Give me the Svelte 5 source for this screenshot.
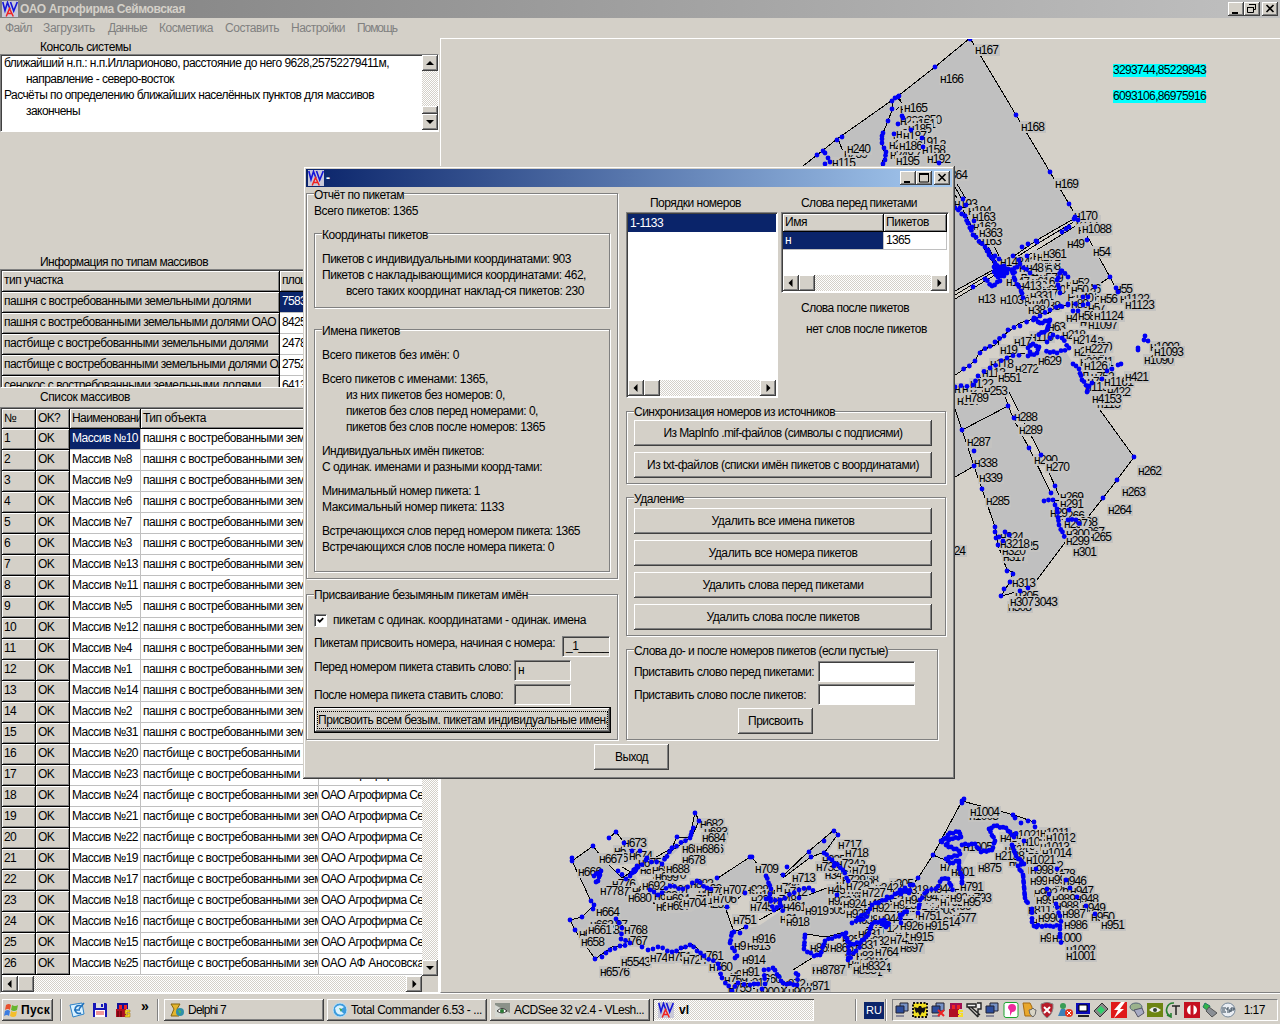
<script>
  // Spreads or tightens letters so that a caption takes the given width.
  function fit(node, width) {
    if (!width) return;
    const natural = node.getBoundingClientRect().width;
    node.style.letterSpacing = (width - natural) / node.textContent.length + 'px';
  }

  const menu = [['Файл', 27, 38], ['Загрузить', 52, 65], ['Данные', 39, 51], ['Косметика', 54, 66], ['Составить', 54, 66], ['Настройки', 54, 66], ['Помощь', 40, 50]];
  const plough = 'пашня с востребованными земельными долями';
  const pasture = 'пастбище с востребованными земельными долями';
  const types = [[plough, 247, '75834'], [plough + ' ОАО', 272, '84256'], [pasture, 264, '24781'], [pasture + ' ОАО', 290, '27523'], ['сенокос с востребованными земельными долями', 257, '64132']];
  const arrays = [10, 8, 9, 6, 7, 3, 13, 11, 5, 12, 4, 1, 14, 2, 31, 20, 23, 24, 21, 22, 19, 17, 18, 16, 15, 25];
  const deletions = [['Удалить все имена пикетов', 143], ['Удалить все номера пикетов', 149], ['Удалить слова перед пикетами', 161], ['Удалить слова после пикетов', 153]];
  const names = [
    ['Всего пикетов без имён: 0', 137, ''], ['Всего пикетов с именами: 1365,', 166, 'gap'],
    ['из них пикетов без номеров: 0,', 159, 'sub'], ['пикетов без слов перед номерами: 0,', 192, 'sub'], ['пикетов без слов после номеров: 1365', 199, 'sub'],
    ['Индивидуальных имён пикетов:', 162, 'gap'], ['С одинак. именами и разными коорд-тами:', 220, ''],
    ['Минимальный номер пикета: 1', 158, 'gap'], ['Максимальный номер пикета: 1133', 182, ''],
    ['Встречающихся слов перед номером пикета: 1365', 258, 'gap'], ['Встречающихся слов после номера пикета: 0', 232, '']
  ];

  const parse = (s) => s.trim().split(/\s+/).map((p) => p.split(',').map(Number));

  const fields = [
    '970,38 1016,115 1050,172 1077,218 1037,240 998,268 950,295 950,170 798,170 817,155 837,139 898,96 935,67',
    '950,302 1000,274 1040,250 1077,224 1087,240 1110,277 1095,287 1083,297 1060,306 1040,317 1020,323 1004,335 1000,345 980,352 975,361 950,378',
    '950,386 973,385 978,375 990,368 1007,357 1025,353 1033,351 1066,352 1073,363 1079,373 1100,410 1134,457 1117,480 1103,498 1078,530 1067,539 1037,580 1030,592 1001,596 1013,572 1007,570 998,545 995,527 982,489 974,466 950,480',
    '572,861 593,846 604,860 622,878 634,870 660,858 672,848 690,832 695,812 699,821 692,836 672,855 650,866 634,872 640,886 655,896 670,885 683,889 697,880 707,888 718,878 750,857 765,875 785,873 809,851 834,830 838,834 830,850 811,856 785,876 771,890 757,889 745,893 727,907 732,932 760,925 800,898 828,887 840,896 858,910 875,903 900,890 918,878 933,855 962,801 1014,815 1034,822 1030,840 1050,860 1058,870 1062,900 1062,944 1035,925 1023,895 1020,860 1005,830 993,828 990,848 970,850 962,866 950,880 925,897 920,912 890,925 870,943 850,960 845,936 826,938 805,934 804,949 814,955 793,970 800,984 766,990 730,990 720,973 715,963 703,956 690,944 674,952 655,946 634,944 612,947 602,957 595,959 575,930 570,920 582,917 594,905 591,901'
  ];
  const gaps = ['1003,391 1013,418 1029,448 1051,493 1055,486 1041,455 1019,412 1007,388', '727,907 745,893 757,889 770,897 772,912 760,918 742,929 737,932'];
  const lines = [
    '798,170 817,155 837,139 898,96 935,67 970,38 1016,115 1050,172 1069,204 1077,218 1110,277 1118,293',
    '1077,217 1037,240 1000,266 955,291', '1075,221 1037,244 1000,268 955,295', '1077,225 1045,245 1000,272 955,299',
    '892,101 892,110 888,121 883,133 882,143 885,155 881,166', '899,97 902,104 896,110', '897,97 906,108', '838,139 842,149 846,153',
    '955,187 969,212 985,240 1000,270', '957,184 975,214 991,240 1002,262', '951,187 963,210 978,238 996,268',
    '1110,277 1095,287 1083,293 1068,304 1040,317 1020,323 1004,335 995,345 980,351 975,361 960,372 950,378',
    '955,386 973,385 990,368 1007,357 1025,353', '1089,387 1100,410 1134,457 1117,480 1103,498 1078,530 1067,540 1037,580',
    '952,400 962,430 974,466 982,489 995,527 998,545 1007,570 1013,572 1010,582 1001,596 1020,591',
    '962,430 1008,406', '974,466 950,480', '1003,391 1013,418 1029,448 1051,493', '1007,388 1019,412 1041,455 1055,486 1061,500',
    '1061,500 1054,501 1059,525 1066,539', '998,339 1000,350 1025,339',
    '572,861 593,846 604,860', '609,838 616,832 635,856', '572,861 591,901 594,905 582,917 570,920 575,930 595,959 612,947 634,944',
    '604,860 622,878 634,870 672,848 677,837 690,837 695,812 699,821 692,836 662,858', '622,867 634,874', '718,878 750,857 752,858 763,870 771,875 785,874 809,851 834,830 838,834',
    '783,878 811,857 825,852 838,834', '727,907 745,893 757,889 770,897', '725,907 734,932 746,927', '759,920 800,898 827,888 837,894',
    '933,855 962,801 1014,815 1034,822', '933,855 918,878 912,886 900,890 874,908', '933,855 945,860', '806,934 826,937 845,932', '793,970 812,958', '714,963 722,980', '675,952 692,944 705,955 714,963'
  ];
  // Surveyed points plotted one by one.
  const spots = `970,39 935,67 898,97 892,101 895,98 899,96 892,109 888,121 883,133 837,140 842,137 823,151 817,155 825,153 828,158 830,162 825,164 1016,115 1050,172 1069,204 1075,217 1078,220 1074,219
    902,116 898,124 894,134 911,130 922,138 923,147 939,163 903,118 963,199 966,205 960,208 965,216 974,221 968,223 972,227 1022,247 1028,244 1036,241 1037,242 1062,232 1069,227 1066,229 1013,256 1027,256 1019,260 988,250 995,256 999,259 989,255 973,287
    1110,277 1095,287 1083,297 1116,288 1118,292 1088,297 1087,240 1060,306 1068,305 1073,311 1078,311 1088,304
    1134,457 1117,480 1103,498 962,430 974,451 974,466 982,489 1008,406 1014,418 1029,448 1041,455 1055,486 1051,493 1069,510 995,527 995,532 996,538 998,545 999,537 1003,541 1005,532 1009,535 1007,571 1013,574 1010,582 1004,589 1001,596 1020,591 1028,588
    1138,350 1145,336 1148,341 1144,340 1138,348 1107,371 1112,369 1118,365 1102,379 1121,364 1089,386 1087,392 1092,383
    593,846 572,861 572,858 609,838 616,832 624,843 632,851 640,851 647,858 591,901 594,905 593,909 582,917 570,920 575,930 595,959 602,957 717,878 750,857 752,857 695,813 699,821 677,837 691,835 672,848 834,831 838,835 824,841 809,852 811,857 787,867 783,875 745,893 727,907 734,932 740,933 746,927 799,898 837,895 834,866
    933,855 941,841 962,801 964,799 962,803 1013,815 1015,818 1021,823 1034,822 1028,821 1035,827 918,878 913,885 900,890 910,885 887,897 878,903 1047,889 1049,894 1057,869 1066,880 1070,888 1077,897 1086,906 1095,914 1036,869`;
  // Chains of closely set points: [step, vertices].
  const chains = [
    [4, '882,135 882,143 886,151 885,160 881,166'], [4, '955,207 965,216 973,234 985,247 995,262 1000,272'], [3, '994,266 1004,266 1007,272 994,272 998,276 1005,276'], [4, '1030,272 1020,264 1012,270 1015,280 1021,290 1024,300'],
    [4, '985,278 992,286 1000,280 995,271 1004,275 998,268 1008,268 1018,273'], [4, '1061,270 1057,280 1060,292 1065,291'], [6, '1062,270 1068,277 1073,284'],
    [7, '1083,304 1068,304 1050,309 1040,316 1020,325 1008,330 1004,335 995,342 980,352 975,361 958,373'], [3, '1034,317 1040,323 1050,319 1047,330 1036,335'],
    [3, '1028,347 1033,344 1039,346 1037,353 1028,355 1032,349'], [6, '955,386 973,385 978,375 990,368 1007,357 1025,353'], [4, '1047,341 1053,335 1062,337 1069,348 1057,352 1043,351'],
    [4, '1073,363 1079,369 1082,379 1088,387 1087,393'], [4, '1044,500 1053,500 1057,508 1059,525 1066,539'], [5, '1068,519 1076,520 1082,525'],
    [3, '594,875 601,871 598,880 594,884'], [3, '632,872 637,866 634,874'], [5, '618,870 626,879 634,871 646,860 662,863 672,848 690,837 695,822'], [5, '650,889 658,895 670,885 683,889 697,880 707,888 715,888'],
    [5, '616,918 622,928 621,938 630,943 610,949 602,957'], [5, '642,946 648,950 658,946 672,952 690,944 704,956 718,963 722,978 732,990 738,983 750,984 758,984 766,992'],
    [4, '732,932 730,943 737,955 733,961'], [4, '766,875 771,889 769,897 774,910 780,903 784,913'], [4, '824,852 832,860 843,869 850,885'], [5, '766,898 780,900 799,889 809,888 817,891'],
    [4, '765,983 764,970 773,967 783,983 797,984 798,975 794,970'], [4, '805,934 804,949 814,955 820,955 825,940 846,933 849,950 848,960 856,950 863,945'],
    [3, '845,936 851,944 860,942 868,935 872,923 884,920 891,925'], [4, '858,917 868,912 872,904 889,898 901,890 909,893 911,886'], [3, '901,893 905,888 909,891'],
    [3, '882,923 886,927 890,921'], [3, '901,922 900,915 909,909'], [4, '918,912 920,900 927,890 936,889 942,878 948,879 954,892'],
    [3, '942,841 950,833 959,831 961,837 950,838 946,845 959,850 960,854 946,858 950,863 959,860 959,869 962,875 962,886'],
    [3, '962,844 975,844 981,851 992,850 995,840 989,829 994,825 1006,828 1014,836 1018,831'], [5, '1024,840 1027,834'],
    [3, '1012,844 1016,856 1024,863 1018,866 1023,874 1025,898 1029,905'], [5, '1032,908 1032,922 1041,930'], [4, '1034,925 1050,926 1060,925 1060,937 1062,946'], [4, '1056,903 1060,916 1062,925'], [4, '852,922 860,920 870,915']
  ];
  function walk([step, s]) {
    const pts = parse(s), out = [];
    for (let i = 1; i < pts.length; i++) {
      const [ax, ay] = pts[i - 1], [bx, by] = pts[i];
      const n = Math.max(1, Math.round(Math.hypot(bx - ax, by - ay) / step));
      for (let k = 0; k < n; k++) out.push([ax + ((bx - ax) * k) / n, ay + ((by - ay) * k) / n + ((i + k) % 2)]);
    }
    return out;
  }
  const dots = [...parse(spots), ...chains.flatMap(walk)];

  // x of the left edge, y of the middle, caption; later ones cover earlier ones.
  const labels = `975,50,н167;940,79,н166;900,109,н164;904,108,н165;900,121,н232;912,124,н151;896,134,н200;908,129,н185;903,136,н187;915,142,н191;890,155,н248;896,161,н195;889,145,н246;899,146,н186;922,150,н158;927,159,н192;844,154,н239;847,149,н240;832,163,н115;1021,127,н168;1055,184,н169;1076,221,н171;1074,216,н170;1078,230,н1087;1082,229,н1088;1067,244,н49;1093,252,н54;944,175,н364;954,204,н193;968,211,н194;972,217,н163;973,227,н162;974,236,н339;978,241,н163;979,233,н363;1000,262,н148;1019,268,н347;1033,256,н160;1037,257,н171;1043,254,н361;1026,268,н48;1006,282,н147;1018,286,н413;1030,296,н331;1032,304,н40;978,299,н13;1000,300,н103;1028,310,н38;1072,283,н52;1071,290,н50;1076,298,н40;1071,304,н80;1115,289,н55;1120,299,н1122;1125,305,н1123;1088,308,н57;1100,299,н56;1066,318,н44;1080,322,н60;1088,325,н1097;1078,316,н58;1094,316,н1124;1048,327,н63;1030,337,н110;1062,335,н218;1073,340,н214;1074,352,н207;1085,349,н227;1080,362,н225;1084,366,н126;1014,342,н17;1000,350,н19;990,364,н118;1015,369,н272;1038,361,н629;982,373,н113;998,378,н551;954,389,н107;962,389,н121;970,384,н122;984,391,н253;957,401,н337;965,398,н789;1150,347,н1092;1144,360,н1090;1154,352,н1093;1085,387,н1132;1104,382,н1161;1125,377,н421;1107,392,н422;1097,404,н113;1092,399,н4153;1014,417,н288;1019,430,н289;1034,460,н290;1046,467,н270;967,442,н287;974,463,н338;979,478,н339;986,501,н285;1138,471,н262;1122,492,н263;1108,510,н264;1060,497,н269;1060,504,н291;1061,516,н266;1050,513,н29;1074,522,н268;1064,524,н297;1081,532,н267;1088,537,н265;1066,534,н300;1066,541,н299;1073,552,н301;1000,537,н324;1015,546,н325;1003,557,н317;1002,551,н320;1000,544,н3218;1011,584,н312;1012,583,н313;1015,596,н305;1028,602,н3043;1008,607,н308;1010,602,н307;948,551,н24;
    700,824,н682;704,832,н683;702,838,н684;700,849,н686;682,849,н68;696,849,н686;614,851,н671;616,858,н671;599,859,н667;629,856,н674;638,863,н675;682,860,н678;578,872,н666;652,870,н689;655,877,н699;666,869,н688;612,884,н776;617,892,н771;600,891,н778;632,891,н69;642,886,н692;628,898,н680;654,896,н693;666,899,н694;656,907,н696;667,906,н697;690,900,н701;683,903,н704;707,892,н708;713,899,н706;723,890,н707;755,869,н709;590,925,н663;596,912,н664;579,934,н662;588,930,н661;581,942,н658;624,930,н768;624,941,н767;600,972,н6576;621,962,н5543;650,958,н748;668,957,н751;683,960,н724;700,956,н761;709,967,н760;724,980,н759;728,988,н755;750,907,н745;733,920,н751;734,946,н917;747,946,н913;752,939,н916;742,960,н914;742,972,н91;776,888,н736;792,878,н713;784,892,н712;773,900,н748;783,907,н461;780,919,н91;786,922,н918;805,911,н919;838,845,н717;845,853,н718;816,867,н735;836,864,н734;852,870,н719;842,880,н729;846,886,н728;828,901,н920;843,904,н924;846,914,н925;810,948,н869;830,948,н866;812,970,н875;816,970,н8787;806,986,н871;782,984,н872;772,992,н901;756,992,н900;788,992,н902;
    862,893,н727;872,908,н921;878,919,н944;858,934,н631;866,941,н632;855,945,н831;856,956,н833;860,962,н834;853,970,н833;862,966,н832;875,952,н764;890,940,н742;905,934,н772;900,926,н926;910,937,н915;918,916,н751;925,926,н915;893,905,н923;905,900,н944;920,897,н943;930,889,н944;940,902,н792;950,898,н932;960,887,н791;968,898,н793;963,902,н95;940,867,н7;951,872,н801;978,868,н875;963,847,н1005;969,816,н1003;970,812,н1004;995,856,н2138;1012,835,н1021;1022,842,н1087;1040,833,н1011;1046,838,н1012;1040,847,н1013;1042,853,н1014;1026,860,н1021;1030,870,н998;1030,881,н995;1048,880,н991;1063,881,н946;1070,891,н947;1075,899,н948;1082,908,н949;1091,917,н950;1101,925,н951;1034,893,н992;1036,900,н993;1052,899,н989;1055,906,н988;1062,914,н987;1064,925,н986;1038,918,н990;1040,938,н999;1052,938,н1000;1066,950,н1002;1066,956,н1001;623,843,н673`
    .split(';').map((l) => l.trim().split(','));
  // Rows of captions that are mostly hidden by their neighbours.
  const crowd = [[900, 115, 926, 128, 5], [893, 140, 935, 160, 5], [1018, 262, 1045, 306, 4], [1066, 285, 1082, 303, 4], [1080, 342, 1092, 385, 5], [640, 870, 672, 905, 5], [604, 925, 609, 930, 5], [745, 890, 760, 900, 5], [855, 880, 905, 950, 4], [842, 940, 870, 972, 4], [905, 890, 958, 925, 4], [1000, 838, 1044, 868, 4], [1028, 870, 1062, 925, 4], [690, 884, 710, 905, 5], [730, 975, 770, 990, 4], [822, 860, 850, 910, 5]]
    .flatMap(([x0, y0, x1, y1, s]) => {
      const out = [];
      for (let y = y0, k = 0; y <= y1; y += s, k++) out.push([x0 + (((k * 17) % 10) / 10) * (x1 - x0), y, 'н' + (193 + ((k * 37 + x0) % 780))]);
      return out;
    });
  const captions = [...crowd, ...labels];

  const tray = ['net', 'bat', 'netx', 'red', 'wrench', 'net', 'pink', 'shieldy', 'shield', 'people', 'screen', 'chip', 'flash', 'disk', 'nvidia', 'sync', 'phi', 'usb', 'esp'];
</script>

{#snippet T(text, w, cls = '')}<span class="t {cls}" use:fit={w}>{text}</span>{/snippet}

{#snippet Logo()}
  <svg class="logo" viewBox="0 0 16 16"><path d="M0 0h16v16H0z" fill="#c9c9d8" /><path d="M.8 1L3 9.500 5.500 1.500 8 8M8.500 1l3.200 9L15.300 1" fill="none" stroke="#1515d8" stroke-width="1.600" /><path d="M4.200 15.500L7.500 7.500l3.800 8M5.500 12.500h4.500" fill="none" stroke="#f02020" stroke-width="1.500" /></svg>
{/snippet}

{#snippet Arrow(dir)}
  <span class="sb"><svg viewBox="0 0 16 16">
    {#if dir === 'l'}<path d="M9.500 4v8L5.500 8z" />{:else if dir === 'r'}<path d="M6.500 4v8l4-4z" />{:else if dir === 'u'}<path d="M4 10h8L8 6z" />{:else}<path d="M4 6h8l-4 4z" />{/if}
  </svg></span>
{/snippet}

{#snippet HScroll()}<div class="hs">{@render Arrow('l')}<span class="sb"></span><i class="track"></i>{@render Arrow('r')}</div>{/snippet}

{#snippet WinButtons(max)}
  <div class="wb">
    <span><svg viewBox="0 0 16 14"><path d="M4 10h6v2H4z" /></svg></span>
    <span><svg viewBox="0 0 16 14">{#if max}<path d="M3.500 3h9v8h-9z" fill="none" stroke="#000" /><path d="M3 2h10v2H3z" />{:else}<path d="M5.500 3v-.5h6v5h-2M3.500 5.500h6v5h-6z" fill="none" stroke="#000" /><path d="M5 2h7v1H5zM3 5h7v1H3z" />{/if}</svg></span>
    <span class="x"><svg viewBox="0 0 16 14"><path d="M4.500 3l7 7M11.500 3l-7 7" stroke="#000" stroke-width="1.600" /></svg></span>
  </div>
{/snippet}

<div class="desk">
  <header class="title">{@render Logo()}{@render T('ОАО Агрофирма Сеймовская', 165, 'bold')}{@render WinButtons(false)}</header>
  <nav>{#each menu as [m, w, slot]}<span class="mi" style:width="{slot}px">{@render T(m, w)}</span>{/each}</nav>

  <div class="main">
    <aside>
      <h2 class="c1">{@render T('Консоль системы', 91)}</h2>
      <div class="console sunk">
        <div class="log">
          <p>{@render T('ближайший н.п.: н.п.Илларионово, расстояние до него 9628,25752279411м,', 385)}</p>
          <p class="in">{@render T('направление - северо-восток', 148)}</p>
          <p>{@render T('Расчёты по определению ближайших населённых пунктов для массивов', 370)}</p>
          <p class="in">{@render T('закончены', 54)}</p>
        </div>
        <div class="vs">{@render Arrow('u')}<i class="track"></i><span class="sb thumb"></span>{@render Arrow('d')}</div>
      </div>
      <h2 class="c2">{@render T('Информация по типам массивов', 168)}</h2>
      <div class="types sunk">
        <div class="row"><b class="fx w1">{@render T('тип участка', 59)}</b><b class="fx rest">{@render T('площадь', 45)}</b></div>
        {#each types as [name, w, v], i}
          <div class="row"><b class="fx w1">{@render T(name, w)}</b><b class="cell rest" class:sel={i === 0}>{@render T(v, 30)}</b></div>
        {/each}
      </div>
      <h2 class="c3">{@render T('Список массивов', 90)}</h2>
      <div class="list sunk">
        <div class="rows">
          <div class="grid">
            <div class="row head"><b class="fx a">№</b><b class="fx b">{@render T('OK?', 22)}</b><b class="fx c">{@render T('Наименование', 76)}</b><b class="fx d">{@render T('Тип объекта', 63)}</b><b class="fx e">{@render T('Владелец', 50)}</b></div>
            {#each arrays as n, i}
              <div class="row"><b class="fx a">{@render T(String(i + 1), i < 9 ? 6 : 12)}</b><b class="fx b">{@render T('OK', 16)}</b><b class="cell c" class:sel={i === 0}>{@render T('Массив №' + n, n > 9 ? 66 : 60)}</b><b class="cell d">{@render T(i < 15 ? plough : pasture, i < 15 ? 251 : 268)}</b><b class="cell e">{@render T(i === 25 ? 'ОАО АФ Аносовская' : 'ОАО Агрофирма Сеймовская', i === 25 ? 109 : 150)}</b></div>
            {/each}
          </div>
          <div class="vs">{@render Arrow('u')}<i class="track"></i>{@render Arrow('d')}</div>
        </div>
        <div class="foot">{@render HScroll()}</div>
      </div>
    </aside>

    <section class="map">
      <svg viewBox="441 39 839 953" width="839" height="953">
        {#each fields as f}<polygon points={f} fill="#c0c0c0" />{/each}
        {#each gaps as g}<polygon points={g} fill="#d4d0c8" />{/each}
        {#each lines as l}<polyline points={l} fill="none" stroke="#000" shape-rendering="crispEdges" />{/each}
        {#each captions as [x, y, s]}
          <rect x={+x - 1} y={+y - 6} width={s.length * 6 + 2} height="12" fill="#c4c3c1" />
          <text x={x} y={+y + 4} textLength={s.length * 6}>{s}</text>
        {/each}
        {#each dots as [x, y]}<circle cx={x} cy={y} r="2.4" fill="#0000f5" />{/each}
      </svg>
      <span class="geo g1">{@render T('3293744,85229843', 93)}</span>
      <span class="geo g2">{@render T('6093106,86975916', 93)}</span>
    </section>
  </div>

  <footer>
    <span class="start"><svg viewBox="0 0 16 16"><path d="M2 3q3-2 5 0L6 8Q4 6 1 8z" fill="#e8502c" /><path d="M8 3q3 2 6 0l-1 5q-3 2-6 0z" fill="#65b52e" /><path d="M1 9q3-2 5 0l-1 5q-2-2-5 0z" fill="#3c7de0" /><path d="M7 9q3 2 6 0l-1 5q-3 2-6 0z" fill="#f3be2c" /></svg>{@render T('Пуск', 29, 'bold')}</span>
    <i class="sep s1"></i>
    <span class="quick">
      <svg viewBox="0 0 16 16"><path d="M1 3l12-2 2 11-11 3z" fill="#d9f1ff" stroke="#2d82c8" /><path d="M12 4a4 4 0 1 0 0 7M5 8h6M10 7l5-6" fill="none" stroke="#2272bd" stroke-width="1.600" /></svg>
      <svg viewBox="0 0 16 16"><path d="M1 1h13l1 1v13H1z" fill="#1616b8" /><path d="M4 1h8v5H4z" fill="#ddd" /><path d="M9 2h2v3H9z" fill="#1616b8" /><path d="M3 8h10v7H3z" fill="#fff" /><path d="M4 10h8M4 12h8" stroke="#d33" /></svg>
      <svg viewBox="0 0 16 16"><path d="M2 1h11v6H2z" fill="#111198" /><path d="M4 3h3v4H4zM9 3h3v4H9z" fill="#e22" /><path d="M1 7h10v8H1z" fill="#b00e22" /><path d="M3 9v6M6 9v6" stroke="#400" /><path d="M10 8h5v2h-3v1h3v4h-5v-2h3v-1h-3z" fill="#f5dc28" stroke="#960" stroke-width=".5" /></svg>
    </span>
    <span class="more">»</span>
    <i class="sep"></i>
    <span class="task"><svg viewBox="0 0 16 16"><path d="M2 2h9L8 7l2 7H2l3-7z" fill="#e3b62e" stroke="#86650c" /><circle cx="11" cy="10" r="4" fill="#2e8fa8" /><path d="M9 8l3 1-1 3z" fill="#53c04b" /></svg>{@render T('Delphi 7', 38)}</span>
    <span class="task"><svg viewBox="0 0 16 16"><circle cx="8" cy="8" r="7" fill="#3c9bdd" stroke="#bfe3f8" /><path d="M3 6q4-5 9-1L8 8l4 4q-6 2-8-2z" fill="#d9f2ff" /><path d="M7 6l3 1-1 3z" fill="#3aa34f" /></svg>{@render T('Total Commander 6.53 - ...', 131)}</span>
    <span class="task"><svg viewBox="0 0 16 16"><path d="M0 1h15v14H0z" fill="#8b9189" /><path d="M0 3l15 8v4H0z" fill="#d5d8d3" /><path d="M2 9q5-5 10 0-5 4-10 0z" fill="#fff" stroke="#333" /><circle cx="7" cy="9" r="2" fill="#287a35" /></svg>{@render T('ACDSee 32 v2.4 - VLesh...', 130)}</span>
    <span class="task on">{@render Logo()}<span class="t bold">vl</span></span>
    <i class="sep s2"></i>
    <span class="lang">RU</span>
    <i class="sep s3"></i>
    <div class="tray">
      {#each tray as k}
        <svg viewBox="0 0 16 16">
          {#if k === 'net' || k === 'netx'}
            <path d="M6 1h8v8H6z" fill="#7894c8" stroke="#223" /><path d="M2 4h8v7H2z" fill="#2b4c9c" stroke="#223" /><path d="M2 14h8" stroke="#889" stroke-width="2" />
            {#if k === 'netx'}<path d="M8 8l6 6M14 8l-6 6" stroke="#e22" stroke-width="2" />{/if}
          {:else if k === 'bat'}
            <path d="M1 1h14v14H1z" fill="#f0e020" stroke="#111" stroke-width="2" stroke-dasharray="2 1.500" /><path d="M2 5l4 1 1-2h2l1 2 4-1-2 6-2-1-2 4-2-4-2 1z" fill="#111" />
          {:else if k === 'red'}
            <path d="M2 1h12v6H2z" fill="#a10e50" /><path d="M4 3h3v4H4zM9 3h3v4H9z" fill="#e22" /><path d="M1 7h10v8H1z" fill="#b00e22" /><path d="M10 8h5v2h-3v1h3v4h-5v-2h3v-1h-3z" fill="#f5dc28" />
          {:else if k === 'wrench'}
            <path d="M1 2h9v3H1zM2 5l10 10M5 5l9 8M11 1h4v6h-3v8" fill="#eee" stroke="#222" stroke-width="1.400" />
          {:else if k === 'pink'}
            <rect x="1" y="0.5" width="14" height="15" rx="2" fill="#fff" stroke="#1da52f" /><path d="M5 6a4 4 0 1 1 4 4l-2 4V9z" fill="#ee2a9c" />
          {:else if k === 'shieldy'}
            <path d="M2 1h7l2 4v9H4z" fill="#e9a82c" stroke="#a66b10" /><path d="M8 8q3 0 4-2 1 2 3 2 0 5-3 7-4-2-4-7z" fill="#d9d5c5" stroke="#666" />
          {:else if k === 'shield'}
            <path d="M8 0l6 2q1 9-6 14Q1 11 2 2z" fill="#b71c2a" stroke="#888" /><path d="M5 5l6 6M11 5l-6 6" stroke="#fff" stroke-width="2" />
          {:else if k === 'people'}
            <circle cx="6" cy="4" r="3" fill="#3a9d55" /><path d="M1 14l3-7h4l3 7z" fill="#3b80b8" /><circle cx="12" cy="11" r="4" fill="#e2341d" /><path d="M10 9l4 4M14 9l-4 4" stroke="#fff" />
          {:else if k === 'screen'}
            <path d="M1 1h14v11H1z" fill="#0b0bb8" /><path d="M4 3h8v6H4z" fill="#fff" stroke="#000" /><path d="M3 14h11" stroke="#222" stroke-width="2" />
          {:else if k === 'chip'}
            <path d="M9 1l6 6-8 8-6-6z" fill="#888" stroke="#333" /><path d="M8 4l4 4-4 4-4-4z" fill="#32d16d" />
          {:else if k === 'flash'}
            <path d="M0 0h16v16H0z" fill="#e01a1a" /><path d="M10 0L3 8h4l-4 8 10-9H9l5-7z" fill="#fff" />
          {:else if k === 'disk'}
            <ellipse cx="7" cy="5" rx="6" ry="4" fill="#9bb28c" stroke="#567" /><path d="M5 8l8-2 2 5-6 4z" fill="#a7abc4" stroke="#556" />
          {:else if k === 'nvidia'}
            <path d="M0 1h16v14H0z" fill="#6d8512" /><path d="M2 8q5-6 12 0-6 5-12 0z" fill="#eee" /><circle cx="8" cy="8" r="2" fill="#343" />
          {:else if k === 'sync'}
            <path d="M9 1a7 7 0 0 0-4 13M2 13l4 2 0-4" fill="none" stroke="#268232" stroke-width="1.600" /><path d="M7 4h8M11 4v9" stroke="#222" stroke-width="1.500" />
          {:else if k === 'phi'}
            <path d="M0 0h16v16H0z" fill="#c51020" /><circle cx="8" cy="8" r="5" fill="#fff" /><path d="M8 2v12" stroke="#c51020" stroke-width="3" />
          {:else if k === 'usb'}
            <path d="M3 1l5 3-2 5-5-4z" fill="#32b44a" stroke="#276" /><path d="M7 5l8 6-5 4-6-6z" fill="#8b8f95" stroke="#555" />
          {:else}
            <circle cx="8" cy="8" r="7" fill="#e9edf3" stroke="#789" /><path d="M2 6h4M2 8h3M2 10h4M9 6H7v2h3v2H7M11 10V6h3v2h-3" fill="none" stroke="#345" />
          {/if}
        </svg>
      {/each}
      <span class="clock">{@render T('1:17', 21)}</span>
    </div>
  </footer>
</div>

<div class="dialog">
  <div class="title act">{@render Logo()}<span class="t bold">-</span>{@render WinButtons(true)}</div>
  <div class="cols">
    <div class="left">
      <div class="group g-rep">
        <span class="lg">{@render T('Отчёт по пикетам', 90)}</span>
        <p class="total">{@render T('Всего пикетов: 1365', 104)}</p>
        <div class="group g-co">
          <span class="lg">{@render T('Координаты пикетов', 106)}</span>
          <p class="gap">{@render T('Пикетов с индивидуальными координатами: 903', 249)}</p>
          <p>{@render T('Пикетов с накладывающимися координатами: 462,', 264)}</p>
          <p class="sub">{@render T('всего таких координат наклад-ся пикетов: 230', 238)}</p>
        </div>
        <div class="group g-na">
          <span class="lg">{@render T('Имена пикетов', 78)}</span>
          <div class="nm">{#each names as [s, w, c]}<p class={c}>{@render T(s, w)}</p>{/each}</div>
        </div>
      </div>
      <div class="group g-as">
        <span class="lg">{@render T('Присваивание безымяным пикетам имён', 214)}</span>
        <div class="chk"><i><svg viewBox="0 0 9 9"><path d="M1 3.500l2.500 2.500L8 1.500" fill="none" stroke="#000" stroke-width="2.200" /></svg></i>{@render T('пикетам с одинак. координатами - одинак. имена', 253)}</div>
        <div class="f f1">{@render T('Пикетам присвоить номера, начиная с номера:', 241)}<span class="inp">{@render T('_1_____', 43)}</span></div>
        <div class="f f2">{@render T('Перед номером пикета ставить слово:', 197)}<span class="inp">н</span></div>
        <div class="f f3">{@render T('После номера пикета ставить слово:', 189)}<span class="inp"></span></div>
        <div class="btn focus"><span class="ring">{@render T('Присвоить всем безым. пикетам индивидуальные имена', 294)}</span></div>
      </div>
    </div>
    <div class="right">
      <div class="top">
        <div class="orders">
          <h3>{@render T('Порядки номеров', 91)}</h3>
          <div class="sunk box"><div class="pick">{@render T('1-1133', 33)}</div><i class="sp"></i>{@render HScroll()}</div>
        </div>
        <div class="words">
          <h3>{@render T('Слова перед пикетами', 116)}</h3>
          <div class="sunk box">
            <div class="row s"><b class="fx n">{@render T('Имя', 22)}</b><b class="fx rest">{@render T('Пикетов', 43)}</b></div>
            <div class="row s"><b class="cell n sel">н</b><b class="cell rest">{@render T('1365', 24)}</b></div>
            <i class="sp"></i>{@render HScroll()}
          </div>
          <h3 class="after">{@render T('Слова после пикетов', 108)}</h3>
          <p class="none">{@render T('нет слов после пикетов', 121)}</p>
        </div>
      </div>
      <div class="group g-sy">
        <span class="lg">{@render T('Синхронизация номеров из источников', 201)}</span>
        <div class="btn">{@render T('Из MapInfo .mif-файлов (символы с подписями)', 239)}</div>
        <div class="btn">{@render T('Из txt-файлов (списки имён пикетов с воординатами)', 272)}</div>
      </div>
      <div class="group g-de">
        <span class="lg">{@render T('Удаление', 50)}</span>
        {#each deletions as [s, w]}<div class="btn">{@render T(s, w)}</div>{/each}
      </div>
      <div class="group g-wo">
        <span class="lg">{@render T('Слова до- и после номеров пикетов (если пустые)', 254)}</span>
        <div class="pf">{@render T('Приставить слово перед пикетами:', 180)}<span class="inp"></span></div>
        <div class="pf">{@render T('Приставить слово после пикетов:', 172)}<span class="inp"></span></div>
        <div class="btn small">{@render T('Присвоить', 55)}</div>
      </div>
    </div>
  </div>
  <div class="btn exit">{@render T('Выход', 33)}</div>
</div>

<style>
  :global(body) { overflow: hidden; background: #d4d0c8; }
  .desk, .dialog { font: 12px/16px 'Liberation Sans', Arial, sans-serif; color: #000; box-sizing: border-box; cursor: default; }
  .desk *, .dialog * { box-sizing: border-box; }
  p, h2, h3 { margin: 0; font: inherit; }
  b { font-weight: normal; }
  .t { white-space: pre; flex: none; }
  .bold { font-weight: bold; }
  .desk { width: 1280px; height: 1024px; display: flex; flex-direction: column; background: #d4d0c8; overflow: hidden; }

  .title { display: flex; align-items: center; height: 18px; flex: none; padding: 0 2px; color: #d4d0c8; background: linear-gradient(90deg, #808080, #c0c0c0); }
  .title.act { color: #fff; background: linear-gradient(90deg, #0a246a, #a6caf0); }
  .logo { width: 16px; height: 16px; margin-right: 2px; flex: none; }
  .wb { display: flex; margin-left: auto; }
  .wb span { width: 16px; height: 14px; display: flex; background: #d4d0c8; box-shadow: inset -1px -1px #404040, inset 1px 1px #fff, inset -2px -2px #808080; }
  .wb .x { margin-left: 2px; }
  nav { height: 20px; flex: none; display: flex; align-items: center; padding-left: 5px; color: #808080; }
  .mi { flex: none; }
  .main { display: flex; flex: none; height: 955px; }
  aside { width: 440px; flex: none; }
  h2 { padding-left: 40px; height: 16px; }
  .c1 { margin-top: 1px; height: 15px; }
  .c2 { margin-top: 122px; height: 15px; }
  .c3 { margin-top: 1px; height: 18px; }
  .sunk { background: #fff; border: 1px solid; border-color: #808080 #fff #fff #808080; box-shadow: inset 1px 1px #404040; }
  .console { display: flex; height: 78px; width: 439px; padding: 0 0 1px 1px; }
  .log { flex: 1; padding-left: 2px; }
  .in { padding-left: 22px; }
  .vs { width: 16px; flex: none; display: flex; flex-direction: column; }
  .hs { display: flex; height: 16px; flex: none; }
  .sb { width: 16px; height: 16px; flex: none; display: flex; background: #d4d0c8; box-shadow: inset -1px -1px #404040, inset 1px 1px #fff, inset -2px -2px #808080; }
  .sb.thumb { height: 8px; }
  .track { flex: 1; background: repeating-conic-gradient(#fff 0 25%, #d4d0c8 0 50%) 0 0 / 2px 2px; }
  .types { height: 119px; width: 440px; overflow: hidden; padding: 1px 0 0 1px; }
  .row { display: flex; height: 21px; }
  .fx { background: #d4d0c8; border-right: 1px solid #000; border-bottom: 1px solid #000; box-shadow: inset 1px 1px #fff, inset -1px -1px #808080; }
  .cell { background: #fff; border-right: 1px solid #c0c0c0; border-bottom: 1px solid #c0c0c0; }
  .fx, .cell { padding: 1px 0 0 2px; overflow: hidden; flex: none; white-space: nowrap; }
  .rest.rest { flex: 1; }
  .cell.sel, .sel { background: #0a246a; color: #fff; }
  .w1 { width: 278px; }
  .list { height: 586px; padding: 1px; width: 440px; }
  .rows { display: flex; height: 567px; }
  .grid { flex: 1; overflow: hidden; }
  .row.head { height: 20px; }
  .a { width: 34px; } .b { width: 34px; } .c { width: 71px; } .d { width: 178px; } .e { width: 130px; }
  .foot { padding-right: 16px; background: #d4d0c8; }

  .map { flex: 1; position: relative; border: 1px solid; border-color: #fff #808080 #808080 #fff; border-right: 0; }
  .map > svg { display: block; }
  text { font: 12px 'Liberation Sans', Arial, sans-serif; }
  .geo { position: absolute; left: 672px; height: 13px; line-height: 13px; background: #0ff; display: flex; }
  .g1 { top: 25px; }
  .g2 { top: 51px; }

  footer { height: 31px; flex: none; display: flex; align-items: flex-start; padding: 5px 2px 0; border-top: 1px solid #fff; font-size: 12px; }
  footer svg { width: 16px; height: 16px; flex: none; }
  .start, .task { display: flex; align-items: center; height: 22px; flex: none; box-shadow: inset -1px -1px #404040, inset 1px 1px #fff, inset -2px -2px #808080; }
  .start { width: 51px; padding-left: 2px; gap: 1px; }
  .task { width: 160px; margin-right: 3px; padding-left: 5px; gap: 3px; }
  .task.on { width: 161px; box-shadow: inset 1px 1px #404040, inset -1px -1px #fff; background: repeating-conic-gradient(#fff 0 25%, #d4d0c8 0 50%) 0 0 / 2px 2px; }
  .sep { width: 2px; height: 22px; margin-right: 5px; border-left: 1px solid #808080; border-right: 1px solid #fff; flex: none; }
  .s1 { margin: 0 7px 0 7px; }
  .quick { display: flex; gap: 7px; padding-top: 3px; }
  .more { width: 26px; padding-left: 10px; font-weight: bold; font-size: 14px; line-height: 14px; flex: none; }
  .s2 { margin: 0 7px 0 38px; }
  .lang { width: 20px; height: 17px; margin-top: 3px; background: #0a246a; color: #fff; font-size: 11px; line-height: 17px; text-align: center; flex: none; }
  .s3 { margin: 0 5px 0 1px; }
  .tray { flex: 1; display: flex; align-items: center; gap: 2.100px; height: 22px; padding-left: 1px; border: 1px solid; border-color: #808080 #fff #fff #808080; }
  .clock { margin-left: 6px; }

  .dialog { position: absolute; left: 303px; top: 166px; width: 652px; height: 613px; padding: 3px; background: #d4d0c8; box-shadow: inset -1px -1px #404040, inset 1px 1px #d4d0c8, inset -2px -2px #808080, inset 2px 2px #fff; }
  .cols { display: flex; height: 557px; }
  .left { width: 313px; padding-top: 6px; flex: none; }
  .right { width: 325px; margin-left: 7px; flex: none; }
  .group { border: 1px solid #808080; box-shadow: 1px 1px #fff, inset 1px 1px #fff; padding-left: 7px; }
  .lg { display: block; width: fit-content; height: 16px; margin-top: -8px; background: #d4d0c8; white-space: pre; }
  .g-rep { width: 312px; height: 386px; }
  .g-rep > .lg { margin-top: -7px; }
  .total { margin-bottom: 14px; }
  .g-co, .g-na { width: 296px; }
  .g-co { height: 75px; }
  .g-co > .lg, .g-na > .lg { margin-top: -7px; }
  .gap { padding-top: 8px; }
  .sub { padding-left: 24px; }
  .g-na { height: 243px; margin-top: 21px; }
  .nm { padding-top: 8px; }
  .g-as { width: 312px; height: 146px; margin-top: 15px; }
  .chk { display: flex; align-items: center; gap: 6px; padding-top: 8px; height: 26px; }
  .chk i { width: 13px; height: 13px; background: #fff; border: 1px solid; border-color: #808080 #fff #fff #808080; box-shadow: inset 1px 1px #404040; padding: 2px; display: flex; }
  .f, .pf { display: flex; justify-content: space-between; align-items: flex-start; }
  .inp { border: 1px solid; border-color: #808080 #fff #fff #808080; box-shadow: inset 1px 1px #404040; height: 21px; padding: 2px 0 0 3px; flex: none; line-height: 15px; overflow: hidden; }
  .f1 { width: 296px; height: 29px; padding-top: 6px; }
  .f1 .inp { width: 48px; margin-top: 1px; }
  .f2, .f3 { width: 257px; height: 24px; }
  .f2 .inp, .f3 .inp { width: 57px; margin-top: 1px; }
  .f2 { margin-top: 1px; }
  .f3 > .t:first-child { margin-top: 4px; }
  .btn { width: 298px; height: 26px; display: flex; align-items: center; justify-content: center; overflow: hidden; box-shadow: inset -1px -1px #404040, inset 1px 1px #fff, inset -2px -2px #808080; }
  .btn.focus { width: 297px; border: 1px solid #000; padding: 2px; }
  .ring { border: 1px dotted #000; width: 100%; height: 18px; line-height: 16px; display: flex; overflow: hidden; }
  h3 { padding-left: 24px; height: 17px; }
  .top { display: flex; height: 224px; padding-top: 8px; }
  .orders { width: 152px; margin-right: 3px; }
  .words { width: 168px; }
  .words h3 { padding-left: 20px; }
  .words h3.after { margin-top: 7px; height: 21px; }
  .box { display: flex; flex-direction: column; padding: 1px; }
  .orders .box { height: 186px; }
  .words .box { height: 81px; }
  .pick { height: 18px; background: #0a246a; color: #fff; padding: 1px 2px; }
  .sp { flex: 1; }
  .row.s { height: 18px; }
  .s .fx, .s .cell { padding-top: 0; }
  .n { width: 101px; }
  .none { padding-left: 25px; }
  .g-sy { width: 320px; height: 73px; }
  .g-sy .btn + .btn, .g-de .btn + .btn { margin-top: 6px; }
  .g-de { width: 320px; height: 139px; margin-top: 13px; }
  .g-de > .lg { margin-top: -7px; height: 17px; }
  .g-wo { width: 312px; height: 91px; margin-top: 13px; }
  .g-wo > .lg { margin-top: -7px; }
  .pf { width: 281px; height: 23px; padding-top: 2px; }
  .pf > .t { margin-top: 3px; }
  .pf .inp { width: 97px; background: #fff; }
  .small { width: 75px; margin: 3px 0 0 104px; }
  .exit { width: 75px; margin: 0 0 0 288px; }
</style>
